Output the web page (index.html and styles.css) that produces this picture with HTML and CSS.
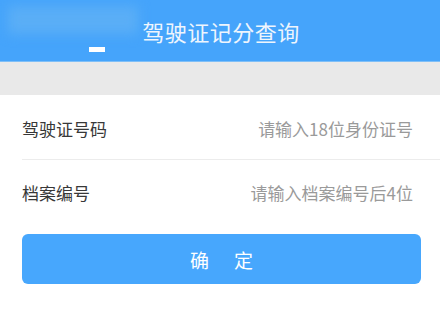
FILE: index.html
```html
<!DOCTYPE html>
<html lang="zh-CN">
<head>
<meta charset="utf-8">
<title>驾驶证记分查询</title>
<link rel="stylesheet" href="styles.css">
</head>
<body>
<header class="topbar">
  <span class="blur-blob"></span>
  <span class="dash"></span>
  <h1 class="title">驾驶证记分查询</h1>
</header>
<div class="band"></div>
<main class="form">
  <div class="row">
    <span class="label">驾驶证号码</span>
    <span class="placeholder">请输入18位身份证号</span>
  </div>
  <div class="row">
    <span class="label">档案编号</span>
    <span class="placeholder">请输入档案编号后4位</span>
  </div>
  <button class="submit" type="button">确　定</button>
</main>
</body>
</html>
```

FILE: styles.css
```css
html, body {
  margin: 0;
  padding: 0;
  background: #ffffff;
  font-family: "Noto Sans CJK SC", "Noto Sans", sans-serif;
}

.topbar {
  position: relative;
  height: 62px;
  background: #45a4fb;
  display: flex;
  align-items: center;
  justify-content: center;
  box-shadow: inset 0 -1px 0 #7fbff7;
  overflow: hidden;
}

.blur-blob {
  position: absolute;
  left: 8px;
  top: 6px;
  width: 130px;
  height: 28px;
  background: #5aaef6;
  filter: blur(6px);
}

.dash {
  position: absolute;
  left: 89px;
  top: 47px;
  width: 16px;
  height: 5px;
  background: #ffffff;
}

.title {
  position: relative;
  margin: 0;
  padding-left: 2px;
  font-size: 22px;
  font-weight: 400;
  color: #eef5fd;
  line-height: 1;
  letter-spacing: 0.5px;
}

.band {
  height: 33px;
  background: #e9e9e9;
}

.form {
  padding-left: 22px;
}

.row {
  height: 64px;
  display: flex;
  align-items: center;
  justify-content: space-between;
  padding-right: 27px;
  font-size: 17px;
}

.row:first-child {
  padding-top: 2px;
  height: 62px;
}

.row + .row {
  border-top: 1px solid #ececec;
}

.label {
  color: #383838;
}

.placeholder {
  color: #9a9a9a;
}

.submit {
  display: block;
  margin-top: 10px;
  width: 399px;
  height: 50px;
  border: none;
  border-radius: 6px;
  background: #47a7fd;
  color: #ffffff;
  font-family: inherit;
  font-size: 19px;
  letter-spacing: 3px;
  padding: 0 0 0 3px;
}
```
